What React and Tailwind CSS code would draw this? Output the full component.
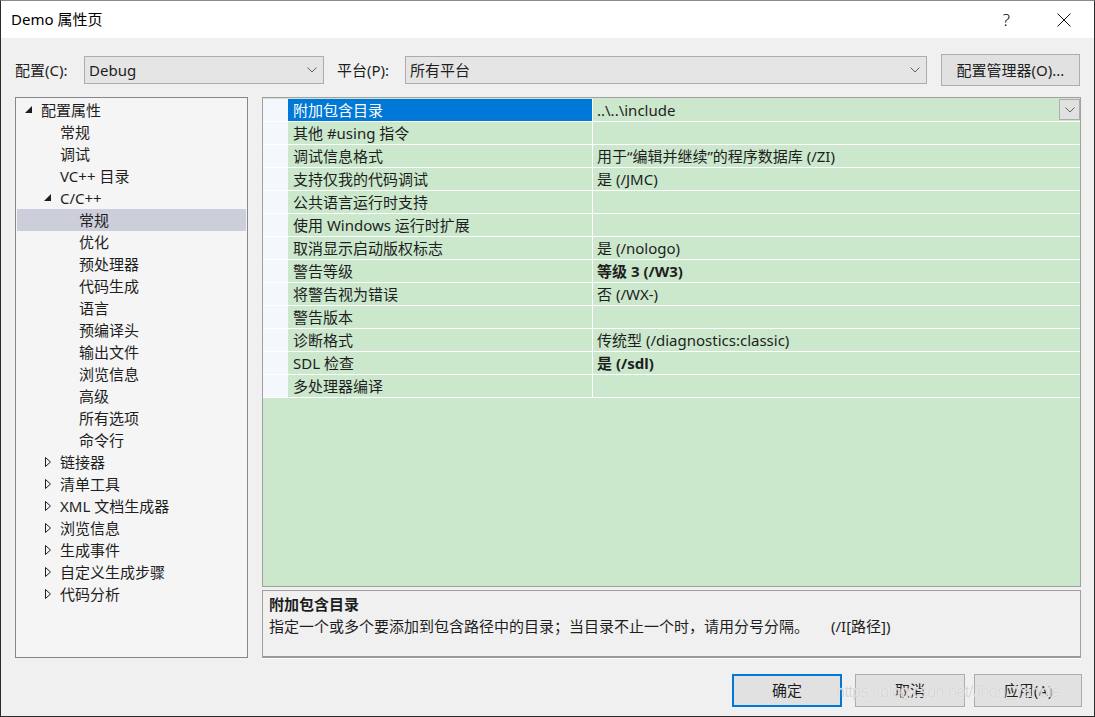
import React from "react";

const FONT = { fontFamily: '"Noto Sans", "Noto Sans CJK SC", sans-serif' };

const tree = [
  { l: 0, t: "配置属性", e: "open" },
  { l: 1, t: "常规" },
  { l: 1, t: "调试" },
  { l: 1, t: "VC++ 目录" },
  { l: 1, t: "C/C++", e: "open" },
  { l: 2, t: "常规", sel: true },
  { l: 2, t: "优化" },
  { l: 2, t: "预处理器" },
  { l: 2, t: "代码生成" },
  { l: 2, t: "语言" },
  { l: 2, t: "预编译头" },
  { l: 2, t: "输出文件" },
  { l: 2, t: "浏览信息" },
  { l: 2, t: "高级" },
  { l: 2, t: "所有选项" },
  { l: 2, t: "命令行" },
  { l: 1, t: "链接器", e: "closed" },
  { l: 1, t: "清单工具", e: "closed" },
  { l: 1, t: "XML 文档生成器", e: "closed" },
  { l: 1, t: "浏览信息", e: "closed" },
  { l: 1, t: "生成事件", e: "closed" },
  { l: 1, t: "自定义生成步骤", e: "closed" },
  { l: 1, t: "代码分析", e: "closed" },
];

const indent = ["pl-[7px]", "pl-[26px]", "pl-[45px]"];

const props = [
  { n: "附加包含目录", v: "..\\..\\include", sel: true },
  { n: "其他 #using 指令", v: "" },
  { n: "调试信息格式", v: "用于“编辑并继续”的程序数据库 (/ZI)" },
  { n: "支持仅我的代码调试", v: "是 (/JMC)" },
  { n: "公共语言运行时支持", v: "" },
  { n: "使用 Windows 运行时扩展", v: "" },
  { n: "取消显示启动版权标志", v: "是 (/nologo)" },
  { n: "警告等级", v: "等级 3 (/W3)", bold: true },
  { n: "将警告视为错误", v: "否 (/WX-)" },
  { n: "警告版本", v: "" },
  { n: "诊断格式", v: "传统型 (/diagnostics:classic)" },
  { n: "SDL 检查", v: "是 (/sdl)", bold: true },
  { n: "多处理器编译", v: "" },
];

const Chevron = ({ className = "" }) => (
  <svg width="10" height="6" viewBox="0 0 10 6" className={className}>
    <polyline points="0.5,0.5 5,5 9.5,0.5" fill="none" stroke="#606060" strokeWidth="1" />
  </svg>
);

const Expander = ({ e }) => (
  <svg width="17" height="22" viewBox="0 0 17 22" className="shrink-0">
    {e === "open" && <polygon points="8,7 8,14 1,14" fill="#1e1e1e" />}
    {e === "closed" && (
      <polygon points="2.5,6.5 2.5,15.5 7.5,11" fill="none" stroke="#1e1e1e" strokeWidth="1" />
    )}
  </svg>
);

const Select = ({ value, width }) => (
  <div
    className={
      "h-[28px] flex items-center justify-between bg-[#e5e5e5] border border-[#acacac] pl-[4px] pr-[6px] " +
      width
    }
  >
    <span className="text-[15px] text-[#1e1e1e]">{value}</span>
    <Chevron />
  </div>
);

export default function App() {
  return (
    <div
      className="w-[1095px] h-[717px] flex flex-col bg-[#f0f0f0] border border-[#2b2b2b] border-t-[#8a8a8a] relative overflow-hidden text-[#1e1e1e]"
      style={FONT}
    >
      {/* title bar */}
      <div className="h-[37px] bg-white flex items-center shrink-0">
        <span className="ml-[10px] text-[15px] text-black">Demo 属性页</span>
        <div className="ml-auto flex items-center">
          <span className="text-[17px] font-light text-black mr-[47px]">?</span>
          <svg width="14" height="14" viewBox="0 0 14 14" className="mr-[23px]">
            <path d="M0.5 0.5 L13.5 13.5 M13.5 0.5 L0.5 13.5" stroke="#111" strokeWidth="1" />
          </svg>
        </div>
      </div>

      {/* config row */}
      <div className="flex items-center pt-[16px] pl-[14px] shrink-0">
        <span className="w-[69px] text-[15px]">配置(C):</span>
        <Select value="Debug" width="w-[240px]" />
        <span className="ml-[13px] w-[68px] text-[15px]">平台(P):</span>
        <Select value="所有平台" width="w-[522px]" />
        <button className="ml-[14px] w-[139px] h-[32px] bg-[#e1e1e1] border border-[#adadad] text-[15px]">
          配置管理器(O)...
        </button>
      </div>

      {/* main */}
      <div className="flex mt-[11px] pl-[14px] h-[561px] shrink-0">
        {/* tree */}
        <div className="w-[233px] h-full border border-[#828790] bg-[#f5f5f5] p-px">
          {tree.map((it, i) => (
            <div
              key={i}
              className={
                "h-[22px] flex items-center " +
                indent[it.l] +
                (it.sel ? " bg-[#cccedb]" : "")
              }
            >
              <Expander e={it.e} />
              <span className="text-[15px] leading-[22px] whitespace-nowrap">{it.t}</span>
            </div>
          ))}
        </div>

        {/* right */}
        <div className="ml-[14px] w-[819px] h-full flex flex-col">
          <div className="flex-1 border border-[#a0a0a0] bg-[#cbe8cd] pt-px">
            {props.map((p, i) => (
              <div key={i} className="h-[23px] flex border-b border-white">
                <div className="w-[25px] bg-[#f4f7fb] shrink-0" />
                <div
                  className={
                    "w-[305px] shrink-0 border-r border-white pl-[5px] flex items-center text-[15px] whitespace-nowrap " +
                    (p.sel ? "bg-[#0078d7] text-white" : "")
                  }
                >
                  {p.n}
                </div>
                <div
                  className={
                    "flex-1 flex items-center pl-[4px] text-[15px] whitespace-nowrap " +
                    (p.bold ? "font-bold" : "")
                  }
                >
                  <span>{p.v}</span>
                  {p.sel && (
                    <div className="ml-auto w-[21px] h-[21px] mt-[-1px] bg-[#e1e1e1] border border-[#adadad] flex items-center justify-center">
                      <Chevron />
                    </div>
                  )}
                </div>
              </div>
            ))}
          </div>
          <div className="mt-[3px] h-[68px] border border-[#a0a0a0] border-b-2 border-b-[#9a9a9a] shadow-[0_1px_0_#ffffff] bg-[#f0f0f0] px-[6px] pt-[2px]">
            <div className="text-[15px] font-bold leading-[22px]">附加包含目录</div>
            <div className="text-[15px] leading-[22px] whitespace-nowrap">
              指定一个或多个要添加到包含路径中的目录；当目录不止一个时，请用分号分隔。
              <span className="ml-[22px]">(/I[路径])</span>
            </div>
          </div>
        </div>
      </div>

      {/* buttons */}
      <div className="flex justify-end mt-[16px] pr-[12px] shrink-0">
        <button className="w-[110px] h-[33px] bg-[#e1e1e1] border-2 border-[#0078d7] text-[15px]">
          确定
        </button>
        <button className="ml-[13px] w-[110px] h-[33px] bg-[#e1e1e1] border border-[#adadad] text-[15px]">
          取消
        </button>
        <button className="ml-[9px] w-[108px] h-[33px] bg-[#e1e1e1] border border-[#adadad] text-[15px]">
          应用(A)
        </button>
      </div>

      {/* watermark */}
      <span
        className="absolute left-[835px] top-[679px] text-[16px] tracking-[-0.5px] text-[#d6d6d6] [text-shadow:0_0_1px_#ffffff]"
        style={{ fontFamily: '"Liberation Sans", sans-serif' }}
      >
        https://blog.csdn.net/Jhon_Yanble
      </span>
    </div>
  );
}
